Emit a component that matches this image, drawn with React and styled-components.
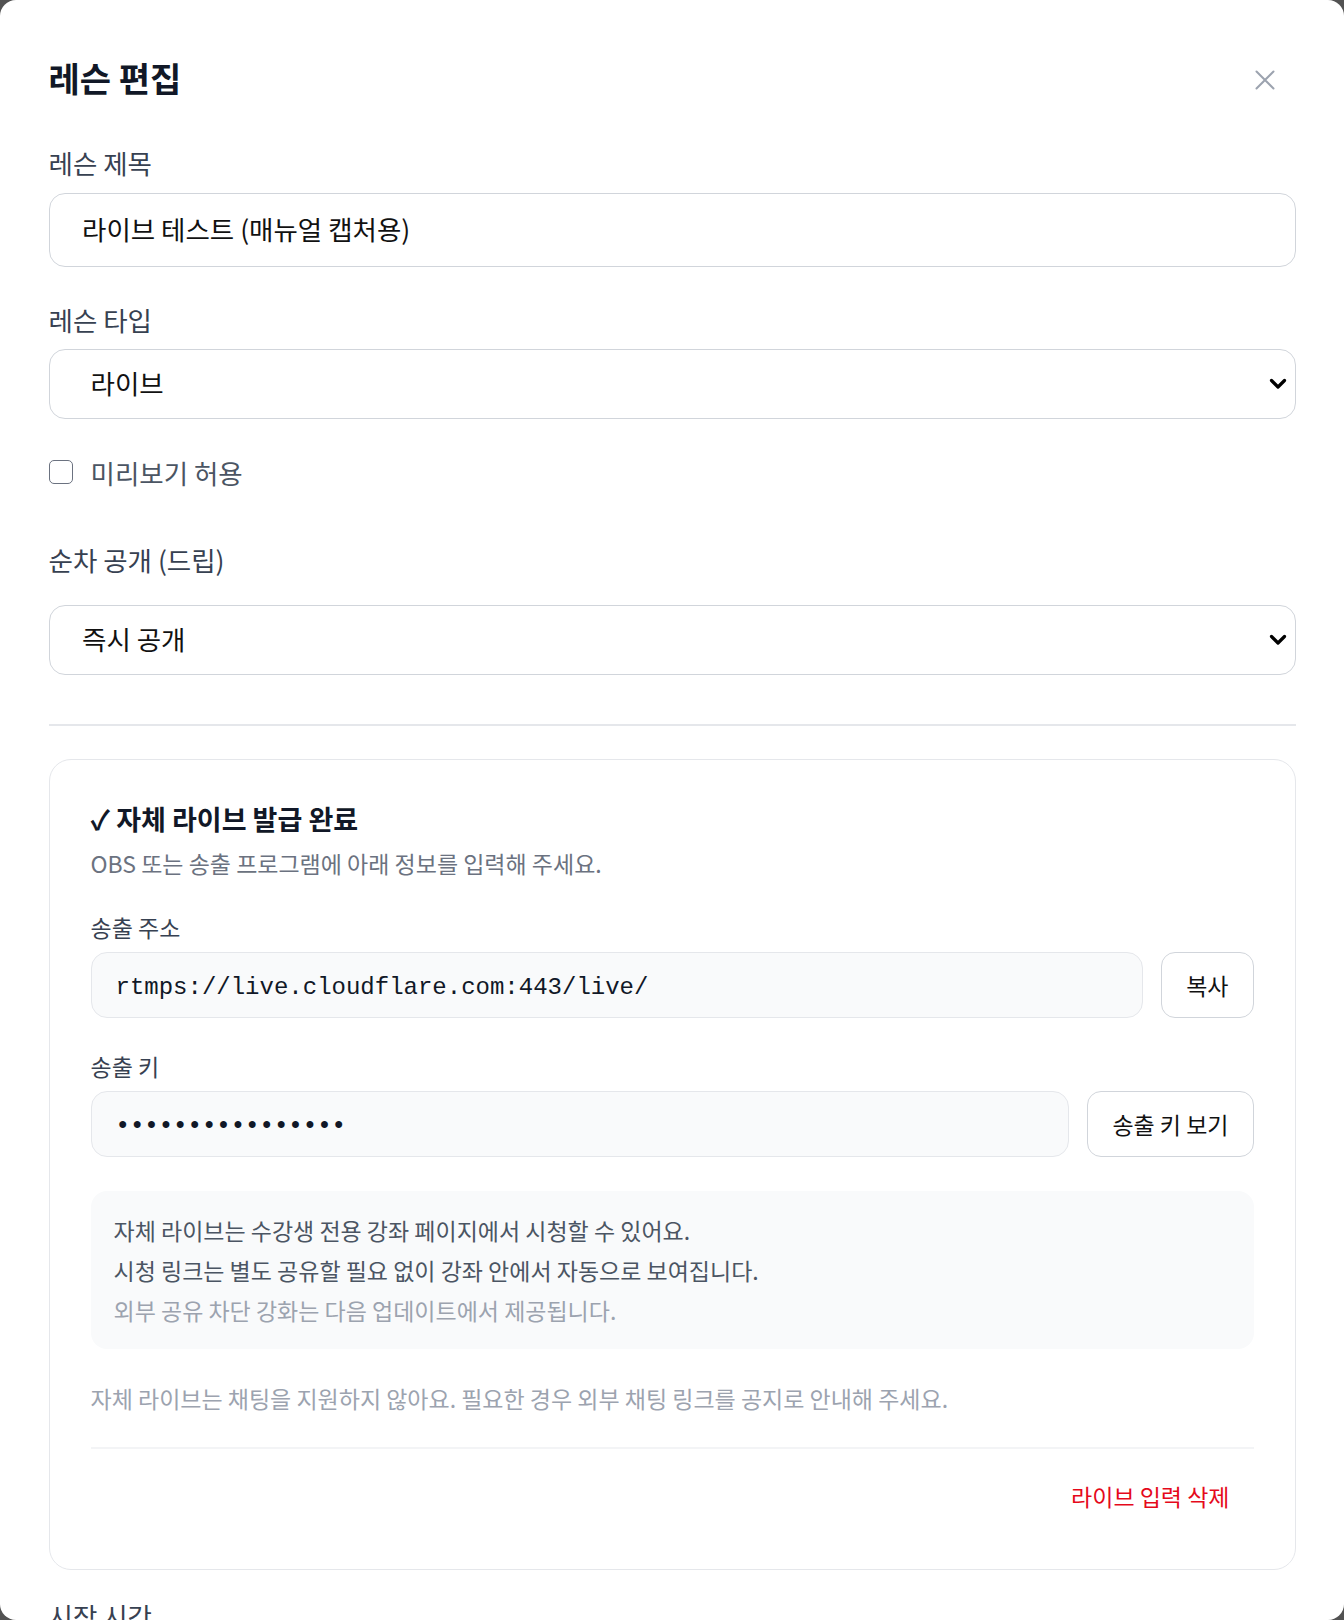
import React from 'react';
import styled, { createGlobalStyle } from 'styled-components';

const GlobalStyle = createGlobalStyle`
  html, body { margin: 0; padding: 0; background: #525252; }
  body { font-family: "Noto Sans CJK KR", "Noto Sans", sans-serif; }
  * { box-sizing: border-box; }
`;

const Modal = styled.div`
  width: 1344px;
  height: 1620px;
  overflow: hidden;
  background: #fff;
  border-radius: 16px;
  padding: 48px 48.5px 0;
`;

const Header = styled.div`
  display: flex;
  align-items: center;
  justify-content: space-between;
  height: 60px;
  margin-bottom: 39px;
`;

const Title = styled.h2`
  margin: 0;
  font-size: 34px;
  font-weight: 700;
  line-height: 1;
  color: #111827;
`;

const CloseButton = styled.button`
  width: 44px;
  height: 44px;
  margin: 4px 8.5px 0 0;
  display: flex;
  align-items: center;
  justify-content: center;
  border: none;
  background: none;
  color: #9ca3af;
  padding: 0;
`;

const Field = styled.div`
  margin-bottom: ${(p) => p.$gap || 0}px;
`;

const Label = styled.label`
  display: block;
  font-size: 26.5px;
  line-height: 32px;
  color: #374151;
  margin-bottom: ${(p) => p.$gap || 14}px;
`;

const TextInput = styled.input`
  display: block;
  width: 100%;
  height: 74px;
  border: 1.5px solid #d1d5db;
  border-radius: 16px;
  padding: 0 32.5px 4px;
  font-family: inherit;
  font-size: 26.5px;
  color: #111;
  background: #fff;
  outline: none;
`;

const SelectWrap = styled.div`
  position: relative;
`;

const Select = styled.select`
  display: block;
  width: 100%;
  height: 70px;
  appearance: none;
  border: 1.5px solid #d1d5db;
  border-radius: 16px;
  padding: 0 40px 4px ${(p) => p.$pad}px;
  font-family: inherit;
  font-size: 26.5px;
  color: #111;
  background: #fff;
  outline: none;
`;

const Chevron = styled.svg`
  position: absolute;
  right: 8.5px;
  top: 50%;
  transform: translateY(-50%);
  pointer-events: none;
`;

const CheckRow = styled.label`
  display: flex;
  align-items: center;
  gap: 18px;
  height: 32px;
  margin-bottom: 56px;
  font-size: 26.5px;
  color: #4b5563;
`;

const CheckBox = styled.span`
  flex: none;
  width: 24px;
  height: 24px;
  border: 1.5px solid #6b7280;
  border-radius: 5px;
  background: #fff;
`;

const Divider = styled.hr`
  border: none;
  height: 2px;
  background: #e5e7eb;
  margin: ${(p) => p.$top}px 0 ${(p) => p.$bottom}px;
`;

const Card = styled.section`
  border: 1.5px solid #e5e7eb;
  border-radius: 22px;
  padding: 41.5px 41px 48.5px;
`;

const CardTitle = styled.h3`
  margin: 0;
  font-size: 27px;
  font-weight: 700;
  line-height: 34px;
  color: #111827;
`;

const CardDesc = styled.p`
  margin: 12px 0 0;
  font-size: 23px;
  line-height: 30px;
  color: #6b7280;
`;

const SubLabel = styled.div`
  margin: ${(p) => p.$top}px 0 10px;
  font-size: 23px;
  line-height: 30px;
  color: #374151;
`;

const InputRow = styled.div`
  display: flex;
  gap: 18px;
`;

const CodeField = styled.div`
  flex: 1;
  height: 66px;
  display: flex;
  align-items: center;
  background: #f9fafb;
  border: 1.5px solid #e5e7eb;
  border-radius: 16px;
  padding: 5px 24px 0;
  font-family: "Liberation Mono", monospace;
  font-size: 24px;
  font-weight: ${(p) => (p.$masked ? 700 : 400)};
  color: #111827;
`;

const OutlineButton = styled.button`
  height: 66px;
  padding: 0 24px;
  border: 1.5px solid #d1d5db;
  border-radius: 14px;
  background: #fff;
  font-family: inherit;
  font-size: 23px;
  color: #111;
`;

const InfoBox = styled.div`
  margin-top: 34px;
  background: #f9fafb;
  border-radius: 16px;
  padding: 19px 23px;
`;

const InfoLine = styled.p`
  margin: 0;
  font-size: 23px;
  line-height: 40px;
  color: ${(p) => (p.$muted ? '#9ca3af' : '#4b5563')};
`;

const Note = styled.p`
  margin: 34px 0 0;
  font-size: 23px;
  line-height: 30px;
  color: #9ca3af;
`;

const InnerDivider = styled.hr`
  border: none;
  height: 2px;
  background: #f3f4f6;
  margin: 34px 0 0;
`;

const Actions = styled.div`
  display: flex;
  justify-content: flex-end;
  margin-top: 23px;
`;

const DangerButton = styled.button`
  border: none;
  background: none;
  padding: 9px 24px;
  font-family: inherit;
  font-size: 23px;
  line-height: 30px;
  color: #e5091b;
`;

const NextLabel = styled(Label)`
  margin-top: 30px;
`;

function ChevronIcon() {
  return (
    <Chevron width="18" height="12" viewBox="0 0 18 12">
      <polyline points="2.5,2.5 9,9 15.5,2.5" fill="none" stroke="#000" strokeWidth="3.2" strokeLinecap="round" strokeLinejoin="round" />
    </Chevron>
  );
}

export default function App() {
  return (
    <>
      <GlobalStyle />
      <Modal>
        <Header>
          <Title>레슨 편집</Title>
          <CloseButton aria-label="닫기">
            <svg width="20" height="20" viewBox="0 0 20 20">
              <path d="M1.5 1.5 L18.5 18.5 M18.5 1.5 L1.5 18.5" stroke="currentColor" strokeWidth="2" strokeLinecap="round" />
            </svg>
          </CloseButton>
        </Header>

        <Field $gap={37}>
          <Label>레슨 제목</Label>
          <TextInput defaultValue="라이브 테스트 (매뉴얼 캡처용)" />
        </Field>

        <Field $gap={37}>
          <Label $gap={13}>레슨 타입</Label>
          <SelectWrap>
            <Select $pad={41} defaultValue="live">
              <option value="live">라이브</option>
            </Select>
            <ChevronIcon />
          </SelectWrap>
        </Field>

        <CheckRow>
          <CheckBox />
          미리보기 허용
        </CheckRow>

        <Field>
          <Label $gap={29}>순차 공개 (드립)</Label>
          <SelectWrap>
            <Select $pad={32.5} defaultValue="now">
              <option value="now">즉시 공개</option>
            </Select>
            <ChevronIcon />
          </SelectWrap>
        </Field>

        <Divider $top={49} $bottom={33} />

        <Card>
          <CardTitle>✓ 자체 라이브 발급 완료</CardTitle>
          <CardDesc>OBS 또는 송출 프로그램에 아래 정보를 입력해 주세요.</CardDesc>

          <SubLabel $top={34}>송출 주소</SubLabel>
          <InputRow>
            <CodeField>rtmps://live.cloudflare.com:443/live/</CodeField>
            <OutlineButton>복사</OutlineButton>
          </InputRow>

          <SubLabel $top={33.5}>송출 키</SubLabel>
          <InputRow>
            <CodeField $masked>••••••••••••••••</CodeField>
            <OutlineButton>송출 키 보기</OutlineButton>
          </InputRow>

          <InfoBox>
            <InfoLine>자체 라이브는 수강생 전용 강좌 페이지에서 시청할 수 있어요.</InfoLine>
            <InfoLine>시청 링크는 별도 공유할 필요 없이 강좌 안에서 자동으로 보여집니다.</InfoLine>
            <InfoLine $muted>외부 공유 차단 강화는 다음 업데이트에서 제공됩니다.</InfoLine>
          </InfoBox>

          <Note>자체 라이브는 채팅을 지원하지 않아요. 필요한 경우 외부 채팅 링크를 공지로 안내해 주세요.</Note>
          <InnerDivider />
          <Actions>
            <DangerButton>라이브 입력 삭제</DangerButton>
          </Actions>
        </Card>

        <NextLabel>시작 시간</NextLabel>
      </Modal>
    </>
  );
}
